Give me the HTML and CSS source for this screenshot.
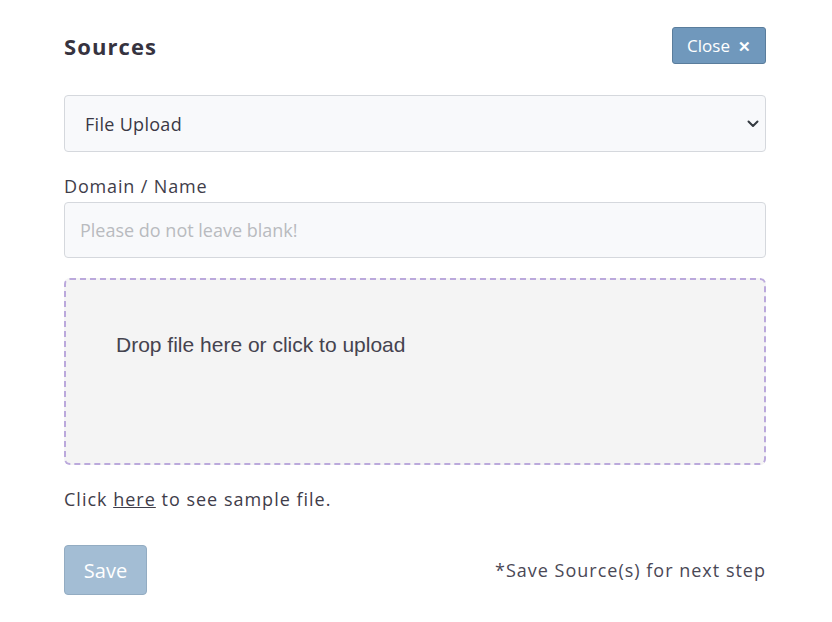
FILE: index.html
```html
<!DOCTYPE html>
<html>
<head>
<meta charset="utf-8">
<link rel="stylesheet" href="styles.css">
</head>
<body>
<div class="panel">
  <div class="header">
    <h2 class="title">Sources</h2>
    <button class="close-btn">Close <span class="x">&#x2715;</span></button>
  </div>
  <div class="select">
    <span>File Upload</span>
    <svg class="chev" width="12" height="8" viewBox="0 0 12 8"><path d="M1.5 1.5 L6 6 L10.5 1.5" fill="none" stroke="#343a40" stroke-width="2" stroke-linecap="round" stroke-linejoin="round"/></svg>
  </div>
  <label class="label">Domain / Name</label>
  <div class="input">Please do not leave blank!</div>
  <div class="dropzone">
    <div class="drop-text">Drop file here or click to upload</div>
  </div>
  <p class="sample">Click <a class="link">here</a> to see sample file.</p>
  <div class="footer">
    <button class="save-btn">Save</button>
    <span class="note">*Save Source(s) for next step</span>
  </div>
</div>
</body>
</html>
```
FILE: styles.css
```css
* { box-sizing: border-box; }
body {
  margin: 0;
  background: #fff;
  font-family: "Open Sans", "Lato", sans-serif;
  color: #3f3d4a;
}
.panel {
  width: 702px;
  margin-left: 64px;
  padding-top: 27px;
}
.header {
  display: flex;
  justify-content: space-between;
  align-items: center;
  height: 37px;
}
.title {
  margin: 0;
  font-size: 22px;
  font-weight: 700;
  letter-spacing: 1.1px;
  color: #36333f;
}
.close-btn {
  height: 37px;
  width: 94px;
  background: #7098bc;
  border: 1px solid #5a7d9c;
  border-radius: 3px;
  color: #fff;
  font-family: inherit;
  font-size: 17px;
  padding: 0;
  display: flex;
  align-items: center;
  justify-content: center;
  gap: 8px;
}
.close-btn .x { font-size: 15px; font-weight: 700; }
.select {
  margin-top: 31px;
  height: 57px;
  background: #f8f9fb;
  border: 1px solid #d5d8dd;
  border-radius: 4px;
  display: flex;
  align-items: center;
  justify-content: space-between;
  padding: 0 6px 0 20px;
  font-size: 18px;
  letter-spacing: 0.3px;
  color: #3a3845;
}
.label {
  display: block;
  margin-top: 23px;
  font-size: 18px;
  line-height: 22px;
  letter-spacing: 0.85px;
  color: #3f3d4a;
}
.input {
  margin-top: 5px;
  height: 56px;
  background: #f8f9fb;
  border: 1px solid #d5d8dd;
  border-radius: 4px;
  display: flex;
  align-items: center;
  padding-left: 15px;
  font-size: 18px;
  color: #b9bbbf;
}
.dropzone {
  margin-top: 20px;
  height: 187px;
  background: #f4f4f4;
  border: 2px dashed #bba9dc;
  border-radius: 6px;
  padding: 53px 0 0 50px;
}
.drop-text {
  font-family: "Liberation Sans", Arial, sans-serif;
  font-size: 21px;
  color: #45434f;
}
.sample {
  margin: 22px 0 0;
  font-size: 18px;
  line-height: 24px;
  letter-spacing: 1px;
}
.link {
  color: #3f3d4a;
  text-decoration: underline;
}
.footer {
  margin-top: 34px;
  display: flex;
  justify-content: space-between;
  align-items: center;
}
.save-btn {
  width: 83px;
  height: 50px;
  background: #a3bdd4;
  border: 1px solid #93acc2;
  border-radius: 4px;
  color: #fff;
  font-family: inherit;
  font-size: 20px;
  padding: 0;
}
.note {
  font-size: 18px;
  letter-spacing: 1px;
  color: #4a4856;
}
```
